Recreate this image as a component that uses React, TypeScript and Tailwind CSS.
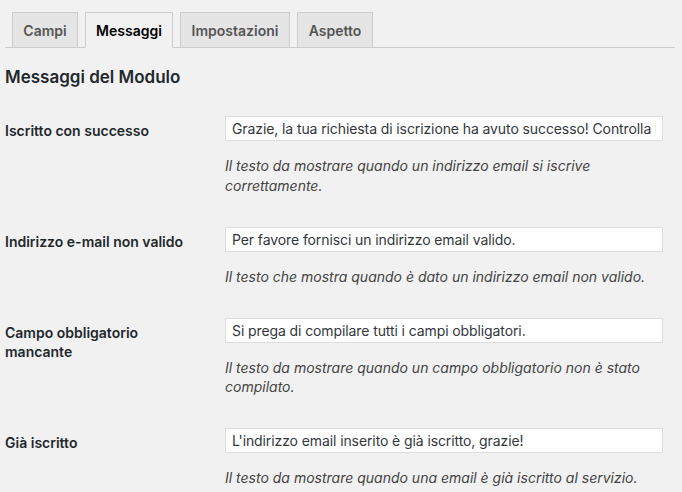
import React from 'react';

const tabs = [
  { label: 'Campi', width: 'w-[66px]' },
  { label: 'Messaggi', width: 'w-[88px]', active: true },
  { label: 'Impostazioni', width: 'w-[110px]' },
  { label: 'Aspetto', width: 'w-[76px]' },
];

const rows = [
  {
    label: 'Iscritto con successo',
    value: 'Grazie, la tua richiesta di iscrizione ha avuto successo! Controlla la tua casella email per confermare.',
    desc: 'Il testo da mostrare quando un indirizzo email si iscrive correttamente.',
  },
  {
    label: 'Indirizzo e-mail non valido',
    value: 'Per favore fornisci un indirizzo email valido.',
    desc: 'Il testo che mostra quando è dato un indirizzo email non valido.',
  },
  {
    label: 'Campo obbligatorio mancante',
    value: 'Si prega di compilare tutti i campi obbligatori.',
    desc: 'Il testo da mostrare quando un campo obbligatorio non è stato compilato.',
  },
  {
    label: 'Già iscritto',
    value: "L'indirizzo email inserito è già iscritto, grazie!",
    desc: 'Il testo da mostrare quando una email è già iscritto al servizio.',
  },
];

export default function App() {
  return (
    <div className="w-[682px] h-[492px] overflow-hidden bg-[#f1f1f1] pl-[5px] pr-[7px] font-['Inter',sans-serif] text-[#23282d]">
      {/* Tabs */}
      <div className="flex gap-[7px] pl-[7px] pt-[12px] border-b border-[#ccc]">
        {tabs.map(tab => (
          <div
            key={tab.label}
            className={`${tab.width} h-[36px] -mb-px flex items-center justify-center border text-[14px] font-semibold ${
              tab.active
                ? 'bg-[#f1f1f1] border-[#ccc] border-b-[#f1f1f1] text-black'
                : 'bg-[#e5e5e5] border-[#ccc] text-[#555]'
            }`}
          >
            {tab.label}
          </div>
        ))}
      </div>

      {/* Section title */}
      <h2 className="mt-[17px] text-[17px] leading-[24px] font-semibold text-[#23282d]">Messaggi del Modulo</h2>

      {/* Form table */}
      <div className="mt-[27px] flex flex-col gap-[31.5px]">
        {rows.map(row => (
          <div key={row.label} className="flex items-start">
            <div className="w-[220px] shrink-0 pt-[5px] pr-[30px] text-[14px] leading-[19.5px] font-semibold text-[#23282d]">
              {row.label}
            </div>
            <div className="w-[438px] flex flex-col">
              <input
                readOnly
                value={row.value}
                className="h-[25px] w-full bg-white border border-[#ddd] px-[6px] text-[14px] tracking-[-0.1px] text-[#32373c] outline-none"
              />
              <p className="mt-[15px] text-[14px] leading-[19.5px] italic text-[#444]">{row.desc}</p>
            </div>
          </div>
        ))}
      </div>
    </div>
  );
}
